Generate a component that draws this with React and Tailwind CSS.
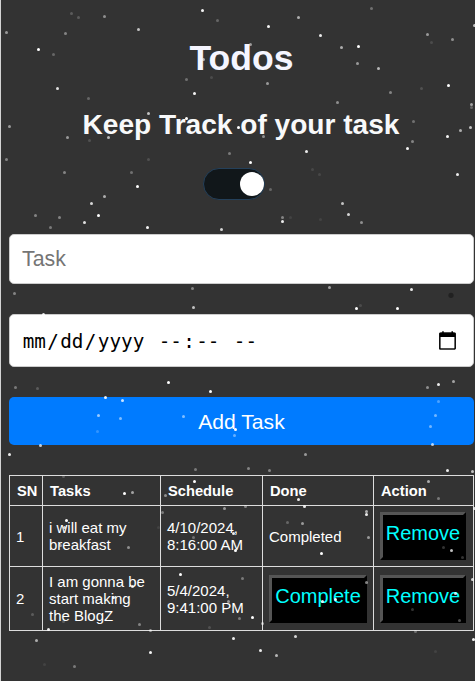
import React from "react";

// Snow flakes: [x, y, opacity]
const FLAKES = [
  [71, 13, 0.2], [78, 17, 0.2], [104, 16, 0.45], [202, 10, 0.95], [217, 20, 0.25], [6, 32, 0.5], [65, 33, 0.4],
  [138, 29, 0.7], [38, 49, 1], [53, 54, 0.25], [203, 59, 0.6], [57, 88, 0.85], [88, 98, 0.25], [186, 79, 0.3],
  [211, 77, 0.12], [194, 93, 0.95], [9, 126, 0.5], [148, 113, 0.7], [186, 118, 1], [67, 137, 0.5], [89, 140, 0.15],
  [108, 137, 0.65], [6, 159, 0.4], [148, 159, 0.15], [229, 153, 0.35], [64, 172, 0.4], [131, 172, 0.3],
  [137, 186, 1], [104, 196, 0.6], [91, 203, 0.8], [35, 215, 0.4], [59, 217, 0.4], [98, 215, 1], [84, 222, 0.85],
  [50, 227, 0.35], [147, 227, 0.95], [221, 229, 0.8], [238, 127, 1],
  [371, 8, 0.3], [298, 17, 0.6], [268, 26, 0.95], [320, 35, 0.9], [250, 44, 0.5], [341, 47, 0.6], [358, 46, 1],
  [427, 34, 0.5], [431, 42, 0.12], [452, 39, 0.45], [474, 25, 0.7], [357, 63, 0.5], [378, 68, 0.65],
  [267, 83, 0.5], [390, 92, 0.4], [421, 88, 0.15], [448, 85, 1], [337, 102, 0.45], [471, 104, 0.55],
  [471, 107, 0.25], [413, 121, 0.3], [470, 127, 0.7], [460, 130, 0.6], [447, 136, 0.95], [263, 136, 0.45],
  [412, 141, 0.4], [407, 148, 0.95], [306, 151, 0.9], [250, 162, 1], [312, 169, 0.1], [319, 174, 0.1],
  [457, 174, 0.9], [270, 189, 0.25], [342, 203, 0.7], [348, 214, 0.8], [282, 217, 0.4], [290, 217, 0.08],
  [282, 221, 0.9], [320, 219, 0.08], [361, 222, 0.45],
  [14, 293, 0.4], [192, 288, 0.4], [193, 307, 0.7], [43, 314, 0.9], [329, 287, 0.55], [411, 289, 0.9],
  [356, 308, 1], [360, 305, 0.12], [397, 308, 1], [15, 387, 0.35], [37, 388, 0.2], [168, 382, 1],
  [210, 391, 1], [105, 397, 0.9], [122, 400, 0.8], [98, 415, 0.6], [120, 418, 0.5], [97, 431, 0.2],
  [183, 416, 0.5], [235, 429, 1], [234, 435, 0.4], [40, 445, 0.75], [9, 454, 0.9], [427, 387, 0.45],
  [438, 384, 0.9], [453, 381, 0.55], [438, 401, 0.3], [435, 415, 0.45], [430, 426, 0.45], [432, 444, 0.7],
  [305, 454, 0.5], [248, 468, 0.4], [269, 470, 0.4], [447, 470, 0.9], [472, 471, 0.7], [195, 469, 0.35],
  [63, 476, 0.2], [194, 481, 1], [124, 493, 1], [132, 492, 0.55], [165, 495, 0.45], [428, 481, 0.6],
  [438, 498, 0.35], [298, 499, 0.9], [224, 508, 0.5], [162, 512, 0.35], [245, 506, 0.4], [304, 506, 0.9],
  [366, 511, 0.6], [366, 514, 0.9], [287, 522, 0.25], [302, 523, 0.5], [474, 508, 0.8], [66, 520, 1],
  [64, 527, 0.8], [158, 527, 0.08], [193, 537, 0.3], [233, 533, 0.9], [235, 550, 1], [368, 537, 0.5],
  [321, 553, 1], [443, 547, 0.2], [451, 550, 0.75], [462, 557, 0.2], [128, 547, 0.45], [60, 545, 0.5],
  [180, 574, 1], [242, 578, 0.35], [366, 582, 0.5], [472, 579, 0.8], [132, 586, 0.8],
  [113, 597, 0.9], [92, 602, 0.2], [228, 601, 0.5], [322, 601, 0.9], [335, 599, 0.9], [455, 593, 0.8],
  [412, 609, 0.2], [459, 620, 0.3], [32, 614, 0.2], [63, 621, 0.2], [139, 624, 0.4], [150, 630, 0.5],
  [48, 629, 0.9], [209, 627, 0.15], [239, 618, 0.35], [252, 617, 1], [262, 623, 0.5], [199, 608, 0.08],
  [36, 640, 0.6], [150, 652, 0.95], [44, 664, 0.08], [74, 666, 0.35], [233, 638, 0.9], [295, 636, 0.8],
  [260, 650, 0.9], [276, 655, 0.65], [415, 631, 0.3], [473, 639, 0.95], [435, 651, 0.08],
];

function Snow() {
  return (
    <svg className="pointer-events-none absolute top-0 -left-px" width="475" height="681" viewBox="0 0 475 681">
      {FLAKES.map(([x, y, o], i) => (
        <circle key={i} cx={x + 0.5} cy={y + 0.5} r="1.5" fill="#fff" opacity={o} />
      ))}
      <circle cx="451" cy="295.3" r="2.6" fill="#1d1d1d" opacity="0.8" />
    </svg>
  );
}

function ActionButton({ children, className = "" }) {
  return (
    <button
      className={`flex h-12 justify-center border-3 border-t-[#555] border-l-[#555] border-r-black border-b-black bg-black pt-1 text-[20px] leading-[28px] text-[#00ffff] ${className}`}
    >
      {children}
    </button>
  );
}

const DATE_FIELDS = ["mm", "/", "dd", "/", "yyyy", "\u00a0", "--", ":", "--", "\u00a0", "--"];

export default function App() {
  return (
    <div className="relative h-[681px] w-[475px] overflow-hidden border-l border-[#d4d4d4] bg-[#333] pl-2 font-['Liberation_Sans',Arial,sans-serif] text-white">
      <header className="flex w-[465px] flex-col items-center text-[#f8f9fa]">
        <h1 className="mt-[37px] text-[35.6px] leading-[43px] font-bold text-[#f5f5ff]">Todos</h1>
        <h2 className="mt-7 mr-px text-[28.1px] leading-[34px] font-bold whitespace-nowrap">Keep Track of your task</h2>
        <button className="mt-[26px] mr-4 flex h-8 w-[62px] items-center justify-end rounded-full border border-[#24405a] bg-[#11171a]">
          <span className="size-6 rounded-full bg-white" />
        </button>
      </header>

      <form className="mt-[34px] flex w-[465px] flex-col">
        <div className="flex h-[50px] items-center rounded-[5px] border border-[#ccc] bg-white px-3 pt-0.5 text-[21.3px] text-[#757575]">
          Task
        </div>
        <div className="mt-[30px] flex h-[53px] items-center justify-between rounded-[5px] border border-[#ccc] bg-white pr-[17px] pl-3">
          <div className="flex pt-[3px] font-['DejaVu_Sans_Mono',monospace] text-[19.3px] text-black">
            {DATE_FIELDS.map((f, i) => (
              <span key={i} className="px-[0.7px]">{f}</span>
            ))}
          </div>
          <svg width="17" height="19" viewBox="0 0 18 20" className="mb-[1px]">
            <path d="M2 2.2h14a1.2 1.2 0 0 1 1.2 1.2v14.4a1.2 1.2 0 0 1-1.2 1.2H2a1.2 1.2 0 0 1-1.2-1.2V3.4A1.2 1.2 0 0 1 2 2.2Z" fill="none" stroke="#111" strokeWidth="1.8" />
            <path d="M1 2.2h16v4H1zM3.4 0.3h1.6v2.5H3.4zM13.2 0.3h1.6v2.5h-1.6z" fill="#000" />
          </svg>
        </div>
        <button type="button" className="mt-[30px] h-12 rounded-[5px] bg-[#007bff] pt-px text-[21.1px] text-white">
          Add Task
        </button>
      </form>

      <table className="mt-[30px] w-[465px] table-fixed border-collapse text-left text-[15px] leading-[17px] [&_td]:border [&_td]:border-[#ddd] [&_td]:px-1.5 [&_td]:py-0 [&_th]:border [&_th]:border-[#ddd] [&_th]:px-[7px] [&_th]:pt-0.5 [&_th]:text-[14.7px]">
        <colgroup>
          <col className="w-[33px]" />
          <col className="w-[118px]" />
          <col className="w-[102px]" />
          <col className="w-[111px]" />
          <col className="w-[100px]" />
        </colgroup>
        <thead>
          <tr className="h-[30px]">
            <th>SN</th>
            <th>Tasks</th>
            <th>Schedule</th>
            <th>Done</th>
            <th>Action</th>
          </tr>
        </thead>
        <tbody>
          <tr className="h-[61px]">
            <td>1</td>
            <td>i will eat my<br />breakfast</td>
            <td className="whitespace-nowrap">4/10/2024,<br />8:16:00 AM</td>
            <td>Completed</td>
            <td><ActionButton className="w-[86px]">Remove</ActionButton></td>
          </tr>
          <tr className="h-16">
            <td>2</td>
            <td>I am gonna be<br />start making<br />the BlogZ</td>
            <td className="whitespace-nowrap">5/4/2024,<br />9:41:00 PM</td>
            <td><ActionButton className="w-[98px]">Complete</ActionButton></td>
            <td><ActionButton className="w-[86px]">Remove</ActionButton></td>
          </tr>
        </tbody>
      </table>
      <Snow />
    </div>
  );
}
